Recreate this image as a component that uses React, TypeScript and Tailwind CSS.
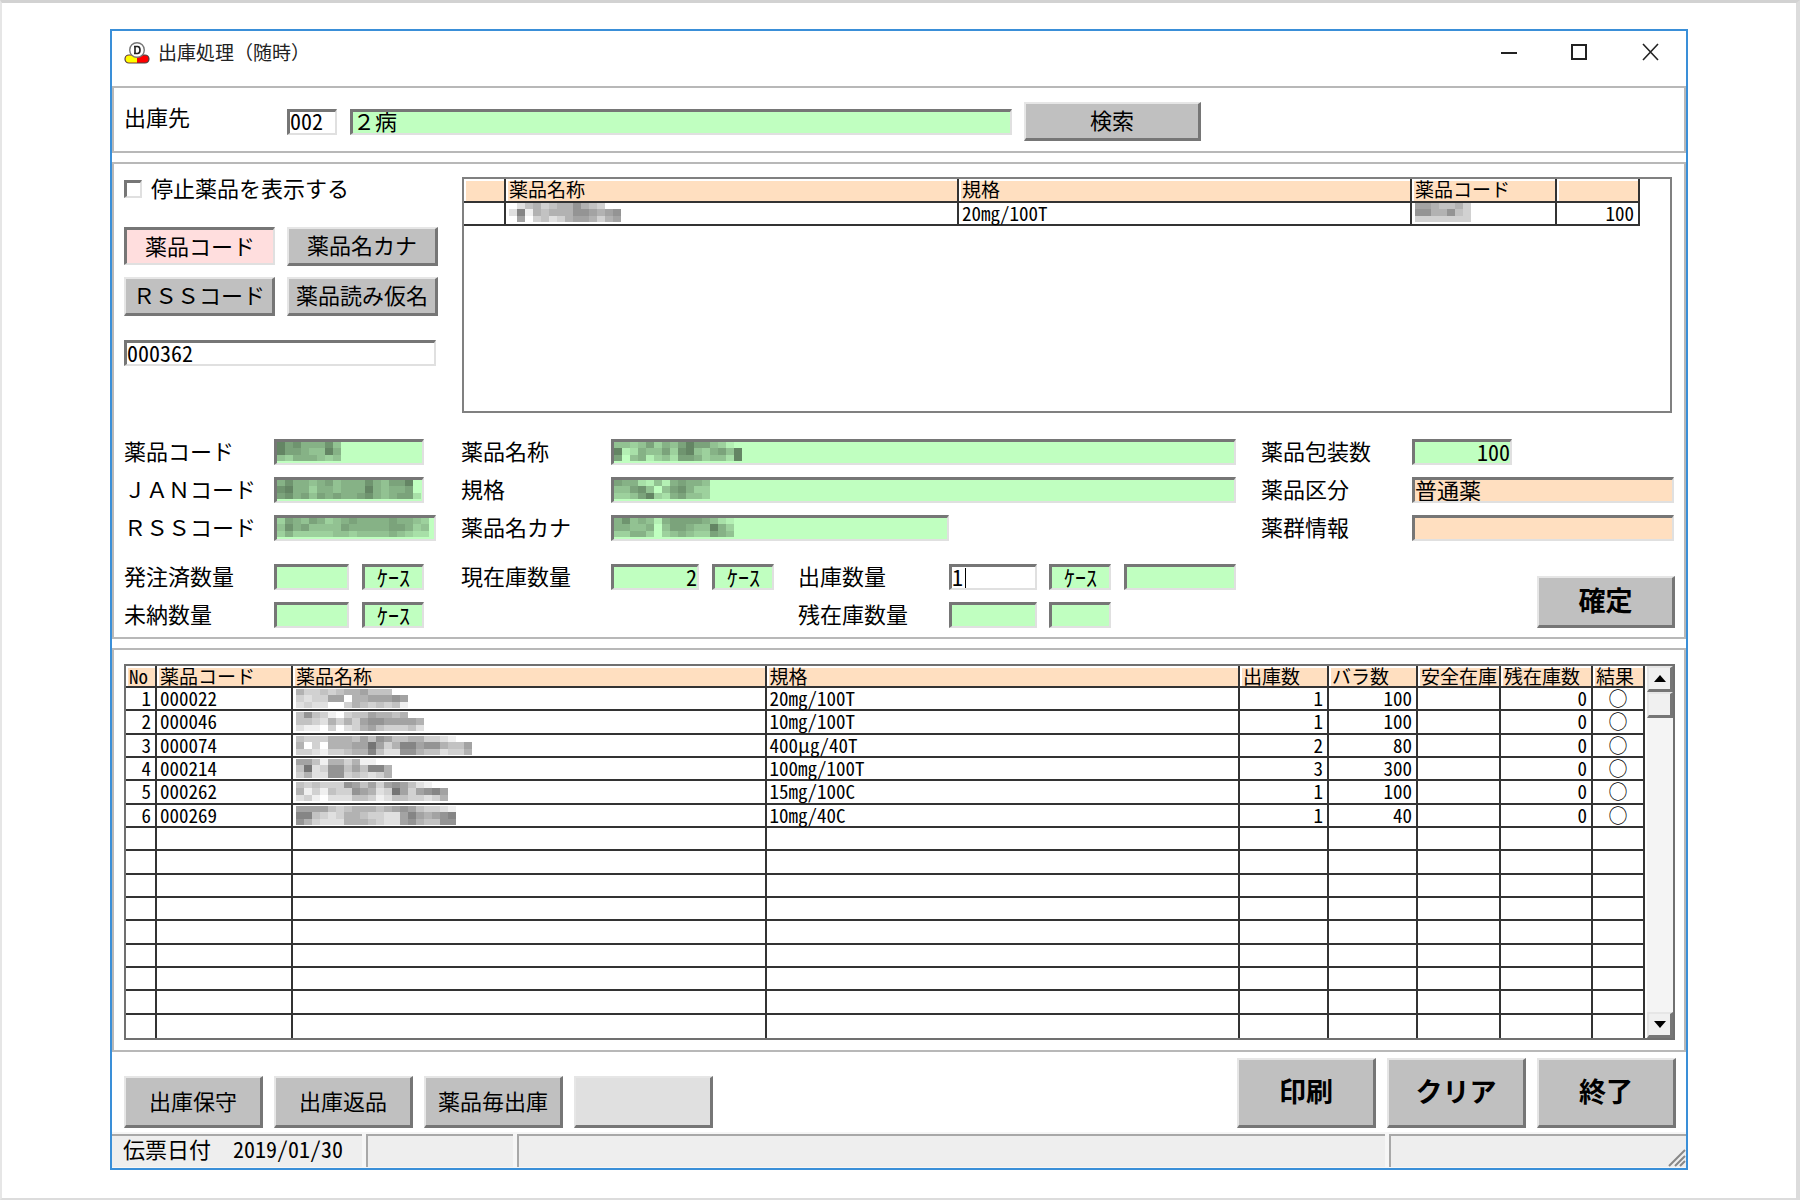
import React from 'react';
import { clsx } from 'clsx';

interface StockRow {
  code: string;
  mask: string[];
  spec: React.ReactNode;
  qty: string;
  units: string;
  rest: string;
}

// Half-width latin and digits, as on the terminal fonts
const HALF = "[font-feature-settings:'hwid']";

const ROWS: StockRow[] = [
  { code: '000022', mask: ['53343455644400', '32336605566676', '23220035434341'], spec: '20mg/100T', qty: '1', units: '100', rest: '0' },
  { code: '000046', mask: ['4743103446554500', '4432535367766665', '2110302356433342'], spec: '10mg/100T', qty: '1', units: '100', rest: '0' },
  { code: '000074', mask: ['4333555464764455332100', '5030555669635886775446', '3321334558422775442335'], spec: <>400<span className="[font-feature-settings:normal]">{'\u03bc'}</span>g/40T</>, qty: '2', units: '80', rest: '0' },
  { code: '000214', mask: ['664155351100', '492377464885', '352277343235'], spec: '100mg/100T', qty: '3', units: '300', rest: '0' },
  { code: '000262', mask: ['4343337646367642100', '5131433765239636786', '2310222443124433235'], spec: '15mg/100C', qty: '1', units: '100', rest: '0' },
  { code: '000269', mask: ['66664345554567643321', '88432355433226865678', '75322255543226754477'], spec: '10mg/40C', qty: '1', units: '40', rest: '0' },
];

const EMPTY_ROWS = Array.from({ length: 9 }, (_, i) => i);

const SUNKEN = 'border-t-[3px] border-l-[3px] border-b-2 border-r-2 border-t-[#767676] border-l-[#767676] border-b-[#e0e0e0] border-r-[#e0e0e0]';
const RAISED = 'border-t-2 border-l-2 border-b-[3px] border-r-[3px] border-t-[#e6e6e6] border-l-[#e6e6e6] border-b-[#767676] border-r-[#767676]';
const TH = 'border-r-2 border-b-2 border-[#333] bg-[#ffdfc0] p-0 pl-[3px] text-left font-normal whitespace-nowrap shadow-[inset_2px_2px_0_#fff]';
const TD = 'border-r-2 border-b-2 border-[#333] p-0 pl-[3px] whitespace-nowrap';
const NUM = 'pr-1 text-right';
const LABEL = 'shrink-0 pb-1 leading-[22px]';

const Mask: React.FC<{ cells: string[] }> = ({ cells }) => (
  <svg width={cells[0].length * 8} height={19} className="block shrink-0" shapeRendering="crispEdges" aria-hidden="true">
    {cells.map((line, y) =>
      line.split('').map((c, x) => (
        <rect key={`${x}-${y}`} x={x * 8} y={[0, 6, 13][y]} width={8} height={[6, 7, 6][y]} fill="#000" opacity={Number(c) * 0.06} />
      ))
    )}
  </svg>
);

interface FieldProps {
  id: string;
  label?: string;
  value?: string;
  mask?: string[];
  wide?: boolean;
  className?: string;
}

const Field: React.FC<FieldProps> = ({ id, label, value = '', mask, wide, className }) => {
  if (mask) {
    return (
      <output id={id} className={clsx('block h-[26px] overflow-hidden', SUNKEN, className)}>
        <Mask cells={mask} />
      </output>
    );
  }
  return (
    <input
      id={id}
      aria-label={label}
      defaultValue={value}
      className={clsx('block h-[26px] min-w-0 rounded-none p-0 pb-1 leading-[17px] outline-none', !wide && HALF, SUNKEN, className)}
    />
  );
};

const Button: React.FC<{ children?: React.ReactNode; className?: string; label?: string }> = ({ children, className, label }) => (
  <button type="button" aria-label={label} className={clsx('flex items-center justify-center pb-1 whitespace-nowrap', RAISED, className)}>
    {children}
  </button>
);

const TitleBar = () => (
  <header className="flex h-[55px] items-start pt-[11px] pl-3">
    <svg width="26" height="22" viewBox="0 0 26 22" className="shrink-0" aria-hidden="true">
      <rect x="1" y="13" width="24" height="8" rx="4" fill="#f00" stroke="#444" strokeWidth="1.2" />
      <path d="M13 13.6H5a3.4 3.4 0 0 0 0 6.8h8z" fill="#ff0" />
      <circle cx="13" cy="8" r="7.3" fill="#fff" stroke="#777" strokeWidth="1.4" />
      <path d="M11 4.5v7M10 4.5h3.5q2.5 0 2.5 3.5t-2.5 3.5H10" fill="none" stroke="#222" strokeWidth="1.6" />
    </svg>
    <h1 className="ml-2 text-[19px] leading-5 text-[#222]">出庫処理（随時）</h1>
    <div className="ml-auto flex pr-[26px]">
      <button type="button" aria-label="最小化" className="flex h-5 w-[71px] items-center justify-start">
        <svg width="18" height="18" viewBox="0 0 18 18"><path d="M1 10h16" stroke="#222" strokeWidth="2" /></svg>
      </button>
      <button type="button" aria-label="最大化" className="flex h-5 w-[71px] items-center justify-start">
        <svg width="18" height="18" viewBox="0 0 18 18"><path d="M1 2h14v14H1z" fill="none" stroke="#222" strokeWidth="2" /></svg>
      </button>
      <button type="button" aria-label="閉じる" className="flex h-5 w-[18px] items-center justify-start">
        <svg width="18" height="18" viewBox="0 0 18 18"><path d="M1 1l15 16M16 1L1 17" stroke="#222" strokeWidth="1.6" /></svg>
      </button>
    </div>
  </header>
);

const Destination = () => (
  <section className="flex items-center border-2 border-[#b8b8b8] pt-[14px] pb-[10px] pl-[10px]">
    <label htmlFor="dest" className="w-[163px] pb-3 leading-[22px]">出庫先</label>
    <Field id="dest" value="002" className="w-[50px] bg-white" />
    <Field id="destName" label="出庫先名" value="２病" wide className="ml-[13px] w-[662px] bg-[#c0ffc0]" />
    <Button className="ml-3 h-[39px] w-[177px] bg-[#c0c0c0]">検索</Button>
  </section>
);

const DrugSearch = () => (
  <div className="flex">
    <div className="w-[338px] shrink-0">
      <div className="flex h-6 items-center">
        <input id="stopped" type="checkbox" className={clsx('mr-[9px] h-[18px] w-[18px] appearance-none bg-white', SUNKEN)} />
        <label htmlFor="stopped" className={LABEL}>停止薬品を表示する</label>
      </div>
      <div className="mt-[26px] grid w-[314px] grid-cols-2 gap-x-3 gap-y-[11px]">
        <button
          type="button"
          aria-pressed="true"
          className={clsx('flex h-[38px] items-center justify-center bg-[#ffdede] pb-1', SUNKEN)}
        >
          薬品コード
        </button>
        <Button className="h-[39px] bg-[#c0c0c0]">薬品名カナ</Button>
        <Button className="h-[39px] bg-[#c0c0c0]">ＲＳＳコード</Button>
        <Button className="h-[39px] bg-[#c0c0c0]">薬品読み仮名</Button>
      </div>
      <Field id="keyword" label="検索キー" value="000362" className="mt-6 w-[312px] bg-white" />
    </div>
    <div className="mr-[3px] h-[236px] flex-1 border-2 border-[#808080]">
      <table className="w-[calc(100%-30px)] table-fixed border-separate border-spacing-0 text-[19px] leading-5">
        <colgroup>
          <col className="w-[42px]" />
          <col />
          <col />
          <col className="w-[145px]" />
          <col className="w-[83px]" />
        </colgroup>
        <thead>
          <tr className="h-6 align-top">
            <th className={TH} />
            <th className={TH}>薬品名称</th>
            <th className={TH}>規格</th>
            <th className={TH}>薬品コード</th>
            <th className={TH} />
          </tr>
        </thead>
        <tbody className={HALF}>
          <tr className="h-[23px] align-top">
            <td className={TD} />
            <td className={TD}><Mask cells={['02453455754300', '28154555776567', '06034235665356']} /></td>
            <td className={TD}>20mg/100T</td>
            <td className={TD}><Mask cells={['6654453', '7755743', '3333333']} /></td>
            <td className={clsx(TD, NUM)}>100</td>
          </tr>
        </tbody>
      </table>
    </div>
  </div>
);

const DrugDetail = () => (
  <div className="mt-[26px] flex">
    <div className="w-[337px] shrink-0">
      <div className="flex items-center">
        <label htmlFor="code" className={clsx('w-[150px]', LABEL)}>薬品コード</label>
        <Field id="code" mask={['86755574', '86654485', '43555434']} className="w-[150px] bg-[#c0ffc0]" />
      </div>
      <div className="mt-3 flex items-center">
        <label htmlFor="jan" className={clsx('w-[150px]', LABEL)}>ＪＡＮコード</label>
        <Field id="jan" mask={['575545645557546680', '785535545558545560', '675646565567545662']} className="w-[150px] bg-[#c0ffc0]" />
      </div>
      <div className="mt-3 flex items-center">
        <label htmlFor="rss" className={clsx('w-[150px]', LABEL)}>ＲＳＳコード</label>
        <Field id="rss" mask={['3654653456555565543', '4756444465555566534', '3533333443444454322']} className="w-[162px] bg-[#c0ffc0]" />
      </div>
      <div className="mt-[23px] flex items-center">
        <label htmlFor="ordered" className={clsx('w-[150px]', LABEL)}>発注済数量</label>
        <Field id="ordered" className="w-[75px] bg-[#c0ffc0]" />
        <Field id="orderedUnit" label="単位" value="ｹｰｽ" className="ml-[13px] w-[62px] bg-[#c0ffc0] text-center" />
      </div>
      <div className="mt-3 flex items-center">
        <label htmlFor="pending" className={clsx('w-[150px]', LABEL)}>未納数量</label>
        <Field id="pending" className="w-[75px] bg-[#c0ffc0]" />
        <Field id="pendingUnit" label="単位" value="ｹｰｽ" className="ml-[13px] w-[62px] bg-[#c0ffc0] text-center" />
      </div>
    </div>

    <div className="min-w-0 flex-1 pr-[25px]">
      <div className="flex items-center">
        <label htmlFor="name" className={clsx('w-[150px]', LABEL)}>薬品名称</label>
        <Field id="name" mask={['4434635468664310', '8125446378435648', '6045134266534428']} className="flex-1 bg-[#c0ffc0]" />
      </div>
      <div className="mt-3 flex items-center">
        <label htmlFor="spec" className={clsx('w-[150px]', LABEL)}>規格</label>
        <Field id="spec" mask={['655214156554', '446740467533', '334683256443']} className="flex-1 bg-[#c0ffc0]" />
      </div>
      <div className="mt-3 flex items-center">
        <label htmlFor="kana" className={clsx('w-[150px]', LABEL)}>薬品名カナ</label>
        <Field id="kana" mask={['574541566665421', '554450466544853', '335530345433654']} className="w-[338px] bg-[#c0ffc0]" />
      </div>
      <div className="mt-[23px] flex items-center">
        <label htmlFor="stock" className={clsx('w-[150px]', LABEL)}>現在庫数量</label>
        <Field id="stock" value="2" className="w-[88px] bg-[#c0ffc0] text-right" />
        <Field id="stockUnit" label="単位" value="ｹｰｽ" className="ml-[13px] w-[62px] bg-[#c0ffc0] text-center" />
        <label htmlFor="issue" className={clsx('ml-6 w-[151px]', LABEL)}>出庫数量</label>
        <div className="relative">
          <Field id="issue" value="1" className="w-[88px] bg-white" />
          <span className="absolute top-1 left-[16px] h-5 w-px bg-black" />
        </div>
        <Field id="issueUnit" label="単位" value="ｹｰｽ" className="ml-3 w-[62px] bg-[#c0ffc0] text-center" />
        <Field id="issueNote" label="備考" className="ml-[13px] flex-1 bg-[#c0ffc0]" />
      </div>
      <div className="mt-3 flex items-center pl-[337px]">
        <label htmlFor="rest" className={clsx('w-[151px]', LABEL)}>残在庫数量</label>
        <Field id="rest" className="w-[88px] bg-[#c0ffc0]" />
        <Field id="restUnit" label="単位" className="ml-3 w-[62px] bg-[#c0ffc0]" />
      </div>
    </div>

    <div className="flex w-[414px] shrink-0 flex-col">
      <div className="flex items-center">
        <label htmlFor="pack" className={clsx('w-[151px]', LABEL)}>薬品包装数</label>
        <Field id="pack" value="100" className="w-[100px] bg-[#c0ffc0] text-right" />
      </div>
      <div className="mt-3 flex items-center">
        <label htmlFor="kind" className={clsx('w-[151px]', LABEL)}>薬品区分</label>
        <Field id="kind" value="普通薬" wide className="mr-px flex-1 bg-[#ffdfc0]" />
      </div>
      <div className="mt-3 flex items-center">
        <label htmlFor="group" className={clsx('w-[151px]', LABEL)}>薬群情報</label>
        <Field id="group" wide className="mr-px flex-1 bg-[#ffdfc0]" />
      </div>
      <Button className="mt-auto h-[52px] w-[138px] self-end bg-[#c0c0c0] text-[27px] font-bold">確定</Button>
    </div>
  </div>
);

const ScrollBar = () => (
  <div className="ml-auto flex w-[26px] shrink-0 flex-col bg-[#f4f4f4]">
    <button type="button" aria-label="上へ" className={clsx('flex h-[26px] items-center justify-center bg-[#f0f0f0]', RAISED)}>
      <svg width="12" height="7" viewBox="0 0 12 7"><path d="M6 0l6 7H0z" fill="#000" /></svg>
    </button>
    <div className={clsx('h-[26px] bg-[#f0f0f0]', RAISED)} />
    <button type="button" aria-label="下へ" className={clsx('mt-auto flex h-[26px] items-center justify-center bg-[#f0f0f0]', RAISED)}>
      <svg width="12" height="7" viewBox="0 0 12 7"><path d="M6 7l6-7H0z" fill="#000" /></svg>
    </button>
  </div>
);

const IssueList = () => (
  <section className="mt-[9px] border-2 border-[#b8b8b8] pt-[14px] pr-[9px] pb-[10px] pl-[10px]">
    <div className="flex border-2 border-[#707070]">
      <table className="h-[372px] w-[calc(100%-28px)] table-fixed border-separate border-spacing-0 text-[19px] leading-5">
        <colgroup>
          <col className="w-[31px]" />
          <col className="w-[136px]" />
          <col />
          <col />
          <col className="w-[89px]" />
          <col className="w-[89px]" />
          <col className="w-[83px]" />
          <col className="w-[92px]" />
          <col className="w-[52px]" />
        </colgroup>
        <thead>
          <tr className="h-[22px] align-top">
            <th className={clsx(TH, HALF)}>No</th>
            <th className={TH}>薬品コード</th>
            <th className={TH}>薬品名称</th>
            <th className={TH}>規格</th>
            <th className={TH}>出庫数</th>
            <th className={TH}>バラ数</th>
            <th className={TH}>安全在庫</th>
            <th className={TH}>残在庫数</th>
            <th className={TH}>結果</th>
          </tr>
        </thead>
        <tbody className={clsx(HALF, '[&>tr:last-child>td]:border-b-0')}>
          {ROWS.map((row, i) => (
            <tr key={row.code} className="h-[23px] align-top">
              <td className={clsx(TD, NUM)}>{i + 1}</td>
              <td className={TD}>{row.code}</td>
              <td className={clsx(TD, 'align-middle')}><Mask cells={row.mask} /></td>
              <td className={TD}>{row.spec}</td>
              <td className={clsx(TD, NUM)}>{row.qty}</td>
              <td className={clsx(TD, NUM)}>{row.units}</td>
              <td className={TD} />
              <td className={clsx(TD, NUM)}>{row.rest}</td>
              <td className="border-r-2 border-b-2 border-[#333] p-0 text-center">○</td>
            </tr>
          ))}
          {EMPTY_ROWS.map((n) => (
            <tr key={n} className="h-[23px]">
              {Array.from({ length: 9 }, (_, i) => (
                <td key={i} className={TD} />
              ))}
            </tr>
          ))}
        </tbody>
      </table>
      <ScrollBar />
    </div>
  </section>
);

const Actions = () => (
  <div className="mt-[6px] flex items-end gap-[11px] pr-[10px] pl-3">
    <Button className="h-[52px] w-[139px] bg-[#c0c0c0]">出庫保守</Button>
    <Button className="h-[52px] w-[139px] bg-[#c0c0c0]">出庫返品</Button>
    <Button className="h-[52px] w-[139px] bg-[#c0c0c0]">薬品毎出庫</Button>
    <Button label="予備" className="h-[52px] w-[139px] bg-[#e0e0e0]" />
    <Button className="ml-auto h-[70px] w-[139px] bg-[#c0c0c0] text-[27px] font-bold">印刷</Button>
    <Button className="h-[70px] w-[139px] bg-[#c0c0c0] text-[27px] font-bold">クリア</Button>
    <Button className="h-[70px] w-[139px] bg-[#c0c0c0] text-[27px] font-bold">終了</Button>
  </div>
);

const StatusBar = () => (
  <footer className="mt-1 flex h-9 gap-1 bg-[#f6f6f6] pt-[2px] pb-px">
    <div className="flex w-[250px] gap-[22px] border-t-2 border-[#a8a8a8] bg-[#eee] pl-[11px] leading-6">
      <span>伝票日付</span>
      <span className={HALF}>2019/01/30</span>
    </div>
    <div className="w-[147px] border-t-2 border-l-2 border-[#a8a8a8] bg-[#eee]" />
    <div className="flex-1 border-t-2 border-l-2 border-[#a8a8a8] bg-[#eee]" />
    <div className="flex w-[297px] items-end justify-end border-t-2 border-l-2 border-[#a8a8a8] bg-[#eee]">
      <svg width="18" height="18" viewBox="0 0 18 18" aria-hidden="true">
        <path d="M1 17L17 1M7 17L17 7M12 17l5-5" stroke="#888" strokeWidth="2" />
      </svg>
    </div>
  </footer>
);

export default function App() {
  return (
    <div className="min-h-screen border-t-[3px] border-r-4 border-b-2 border-l-2 border-t-[#d2d2d2] border-r-[#dcdcdc] border-b-[#dcdcdc] border-l-[#e6e6e6] bg-white px-[108px] pt-[26px] font-['Noto_Sans_CJK_JP',sans-serif] text-[22px] leading-7 text-black">
      <main className="border-2 border-[#3a8fd8] bg-white">
        <TitleBar />
        <Destination />
        <section className="mt-[9px] border-2 border-[#b8b8b8] pt-[13px] pr-[9px] pb-[9px] pl-[10px]">
          <DrugSearch />
          <DrugDetail />
        </section>
        <IssueList />
        <Actions />
        <StatusBar />
      </main>
    </div>
  );
}
